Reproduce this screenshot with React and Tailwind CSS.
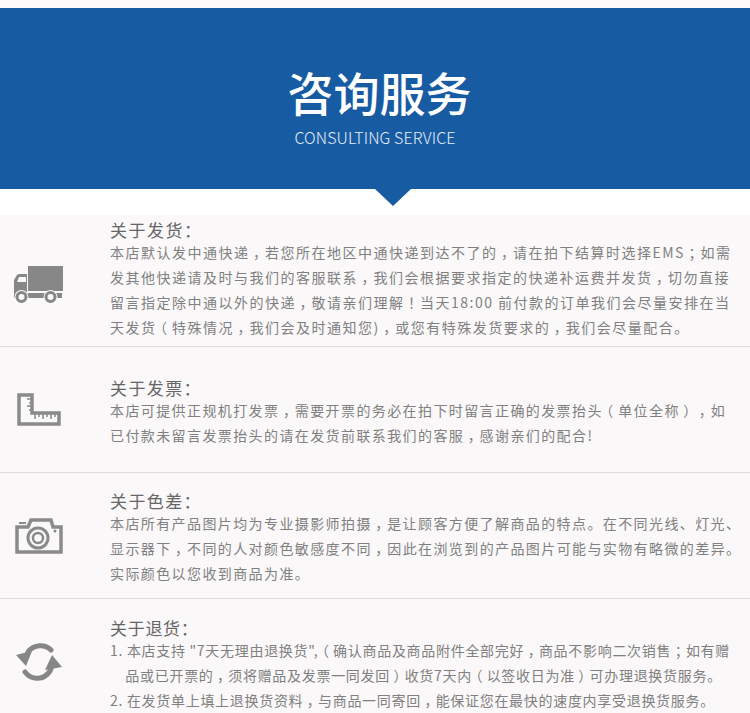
const sections = [
  {
    title: '关于发货：',
    icon: 'truck',
    box: 'h-[132px]',
    iconBox: 'pt-[9px]',
    textBox: 'pt-[5px] tracking-[1.500px]',
    lines: [
      '本店默认发中通快递，若您所在地区中通快递到达不了的，请在拍下结算时选择EMS；如需',
      '发其他快递请及时与我们的客服联系，我们会根据要求指定的快递补运费并发货，切勿直接',
      '留言指定除中通以外的快递，敬请亲们理解！当天18:00 前付款的订单我们会尽量安排在当',
      '天发货（特殊情况，我们会及时通知您)，或您有特殊发货要求的，我们会尽量配合。',
    ],
  },
  {
    title: '关于发票：',
    icon: 'ruler',
    box: 'h-[126px]',
    iconBox: '',
    textBox: 'pt-[31px] tracking-[1.400px]',
    lines: [
      '本店可提供正规机打发票，需要开票的务必在拍下时留言正确的发票抬头（单位全称），如',
      '已付款未留言发票抬头的请在发货前联系我们的客服，感谢亲们的配合!',
    ],
  },
  {
    title: '关于色差：',
    icon: 'camera',
    box: 'h-[126px]',
    iconBox: '',
    textBox: 'pt-[18px] tracking-[1.400px]',
    lines: [
      '本店所有产品图片均为专业摄影师拍摄，是让顾客方便了解商品的特点。在不同光线、灯光、',
      '显示器下，不同的人对颜色敏感度不同，因此在浏览到的产品图片可能与实物有略微的差异。',
      '实际颜色以您收到商品为准。',
    ],
  },
  {
    title: '关于退货：',
    icon: 'refresh',
    box: 'h-[126px]',
    iconBox: '',
    textBox: 'pt-[19px] tracking-[0.700px]',
    lines: [
      '1. 本店支持 "7天无理由退换货",（确认商品及商品附件全部完好，商品不影响二次销售；如有赠',
      '    品或已开票的，须将赠品及发票一同发回）收货7天内（以签收日为准）可办理退换货服务。',
      '2. 在发货单上填上退换货资料，与商品一同寄回，能保证您在最快的速度内享受退换货服务。',
    ],
  },
];

// 参考图的全角标点在字格中间：用半宽字形，两边各补半格
const Line = ({ text }) =>
  text.split(/([，；！（）])/).map((part, index) =>
    index % 2 === 1 ? (
      <span key={index} className="mx-[3.500px] [font-feature-settings:'halt']">{part}</span>
    ) : (
      part
    ),
  );

const TruckIcon = () => (
  <svg width="52" height="38" viewBox="0 0 52 38" fill="#878787">
    <rect x="15" y="0" width="35" height="25" />
    <path fillRule="evenodd" d="M1 14 L4 9 Q5 8 7 8 H14 V27 H49 V32 H1 Z M4 16 L6 11 H13 V16 Z" />
    <circle cx="8.500" cy="31" r="7" fill="#faf8f9" />
    <circle cx="37.500" cy="31" r="7" fill="#faf8f9" />
    <circle cx="8.500" cy="31" r="4.500" fill="none" stroke="#878787" strokeWidth="3" />
    <circle cx="37.500" cy="31" r="4.500" fill="none" stroke="#878787" strokeWidth="3" />
  </svg>
);

const RulerIcon = () => (
  <svg width="44" height="33" viewBox="0 0 44 33" fill="none" stroke="#8a8a8a">
    <path d="M2 2 H15 V20 H42 V31 H2 Z" strokeWidth="3.500" />
    <path d="M15 6 H10 M15 10 H12 M15 13 H10 M15 17 H12 M18 20 V26 M22 20 V24 M26 20 V26 M30 20 V24 M34 20 V26 M38 20 V24" strokeWidth="1.500" />
  </svg>
);

const CameraIcon = () => (
  <svg width="48" height="36" viewBox="0 0 48 36" fill="none" stroke="#8a8a8a">
    <path d="M2 9 H13 L16 2 H36 L38 9 H46 V34 H2 Z" strokeWidth="3.500" />
    <circle cx="23" cy="20" r="10" strokeWidth="3" />
    <circle cx="23" cy="20" r="5" strokeWidth="2.500" />
    <circle cx="40" cy="13" r="1.500" fill="#8a8a8a" stroke="none" />
    <path d="M4 5 H11" strokeWidth="2" />
  </svg>
);

const RefreshIcon = () => (
  <svg width="46" height="38" viewBox="0 0 46 38" fill="none" stroke="#868686">
    <path d="M35 7 C29 1 18 1 12 9 L10 14" strokeWidth="5" strokeLinecap="round" />
    <path d="M9 29 C16 38 28 37 34 28 L36 23" strokeWidth="5" strokeLinecap="round" />
    <path d="M0 12 L16 8 L10 23 Z" fill="#868686" stroke="none" />
    <path d="M46 24 L29 27 L36 12 Z" fill="#868686" stroke="none" />
  </svg>
);

const icons = { truck: TruckIcon, ruler: RulerIcon, camera: CameraIcon, refresh: RefreshIcon };

export default function App() {
  return (
    <div className="h-[713px] overflow-hidden bg-white font-['Noto_Sans_CJK_SC','Noto_Sans',sans-serif] [text-spacing-trim:space-all]">
      <div className="h-2 bg-[#fbf9fa]" />

      {/* 标题 */}
      <div className="relative flex h-[181px] flex-col items-center bg-[#175ba3] pt-[53px] text-white">
        <h1 className="ml-[9px] text-[46px] leading-[60px] font-medium">咨询服务</h1>
        <p className="mt-[4px] text-[16px] leading-[24px] font-light tracking-[0.100px] text-white/90">CONSULTING SERVICE</p>
        <div className="absolute top-full left-[375px] h-0 w-0 border-x-[18px] border-t-[17px] border-x-transparent border-t-[#175ba3]" />
      </div>

      <div className="mt-[26px] bg-[#faf8f9]">
        {sections.map((section) => {
          const Icon = icons[section.icon];
          return (
            <div
              key={section.title}
              className={`flex items-center border-b border-[#dcdcdc] last:border-b-0 ${section.box}`}
            >
              <div className={`flex w-[110px] shrink-0 justify-center pr-[32px] ${section.iconBox}`}>
                <Icon />
              </div>
              <div className={`self-start whitespace-pre ${section.textBox}`}>
                <h2 className="text-[17px] leading-[20px] font-normal text-[#666666]">
                  {section.title}
                </h2>
                {section.lines.map((line) => (
                  <p key={line} className="text-[14px] leading-[25px] text-[#808080]">
                    <Line text={line} />
                  </p>
                ))}
              </div>
            </div>
          );
        })}
      </div>
    </div>
  );
}
